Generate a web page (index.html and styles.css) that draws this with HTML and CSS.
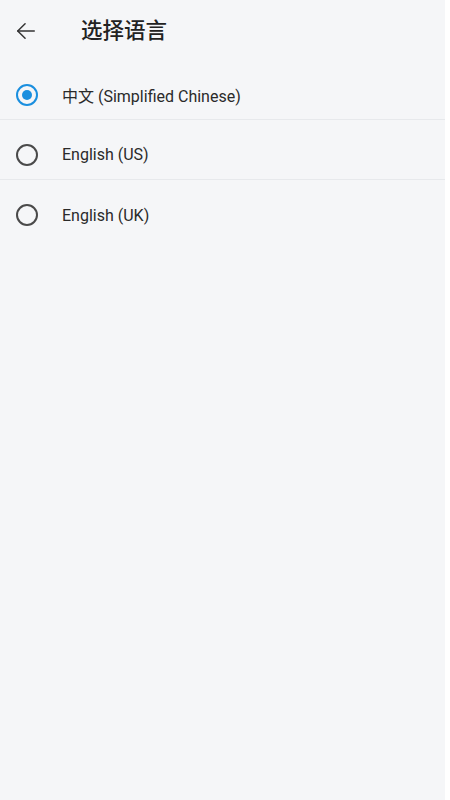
FILE: index.html
```html
<!DOCTYPE html>
<html lang="zh">
<head>
  <meta charset="UTF-8" />
  <meta name="viewport" content="width=device-width, initial-scale=1.0"/>
  <title>选择语言</title>
  <link rel="stylesheet" href="styles.css">
</head>
<body>
  <div class="screen">
    <header class="app-bar">
      <button class="back" aria-label="返回">
        <svg width="22" height="22" viewBox="0 0 24 24" fill="none" stroke="#333" stroke-width="1.6" stroke-linecap="round" stroke-linejoin="round">
          <path d="M21 12H3"/>
          <path d="M11 4l-8 8 8 8"/>
        </svg>
      </button>
      <h1>选择语言</h1>
    </header>

    <ul class="lang-list">
      <li class="lang-item selected">
        <span class="radio"></span>
        <span class="label">中文 (Simplified Chinese)</span>
      </li>
      <li class="lang-item">
        <span class="radio"></span>
        <span class="label">English (US)</span>
      </li>
      <li class="lang-item">
        <span class="radio"></span>
        <span class="label">English (UK)</span>
      </li>
    </ul>
  </div>
</body>
</html>
```

FILE: styles.css
```css
* {
  box-sizing: border-box;
  margin: 0;
  padding: 0;
}

body {
  font-family: Roboto, "Noto Sans CJK SC", sans-serif;
  background: #fff;
}

.screen {
  width: 445px;
  height: 800px;
  background: #f5f6f8;
}

.app-bar {
  height: 60px;
  display: flex;
  align-items: center;
  padding-left: 15px;
}

.back {
  background: none;
  border: none;
  width: 22px;
  height: 22px;
  display: flex;
  margin-top: 2px;
  margin-right: 44px;
}

.app-bar h1 {
  font-size: 21.5px;
  font-weight: 500;
  color: #222;
  margin-top: -4px;
}

.lang-list {
  list-style: none;
}

.lang-item {
  height: 60px;
  display: flex;
  align-items: center;
  padding: 10px 0 0 16px;
  border-bottom: 1.5px solid #e7e9ec;
}

.lang-item:last-child {
  border-bottom: none;
}

.radio {
  width: 22px;
  height: 22px;
  border-radius: 50%;
  border: 2px solid #4a4a4a;
  margin-right: 24px;
  display: flex;
  align-items: center;
  justify-content: center;
}

.selected .radio {
  border: 2.5px solid #1a8fdf;
}

.selected .radio::after {
  content: "";
  width: 10px;
  height: 10px;
  border-radius: 50%;
  background: #1a8fdf;
}

.label {
  font-size: 16px;
  color: #2a2a2a;
}
```
